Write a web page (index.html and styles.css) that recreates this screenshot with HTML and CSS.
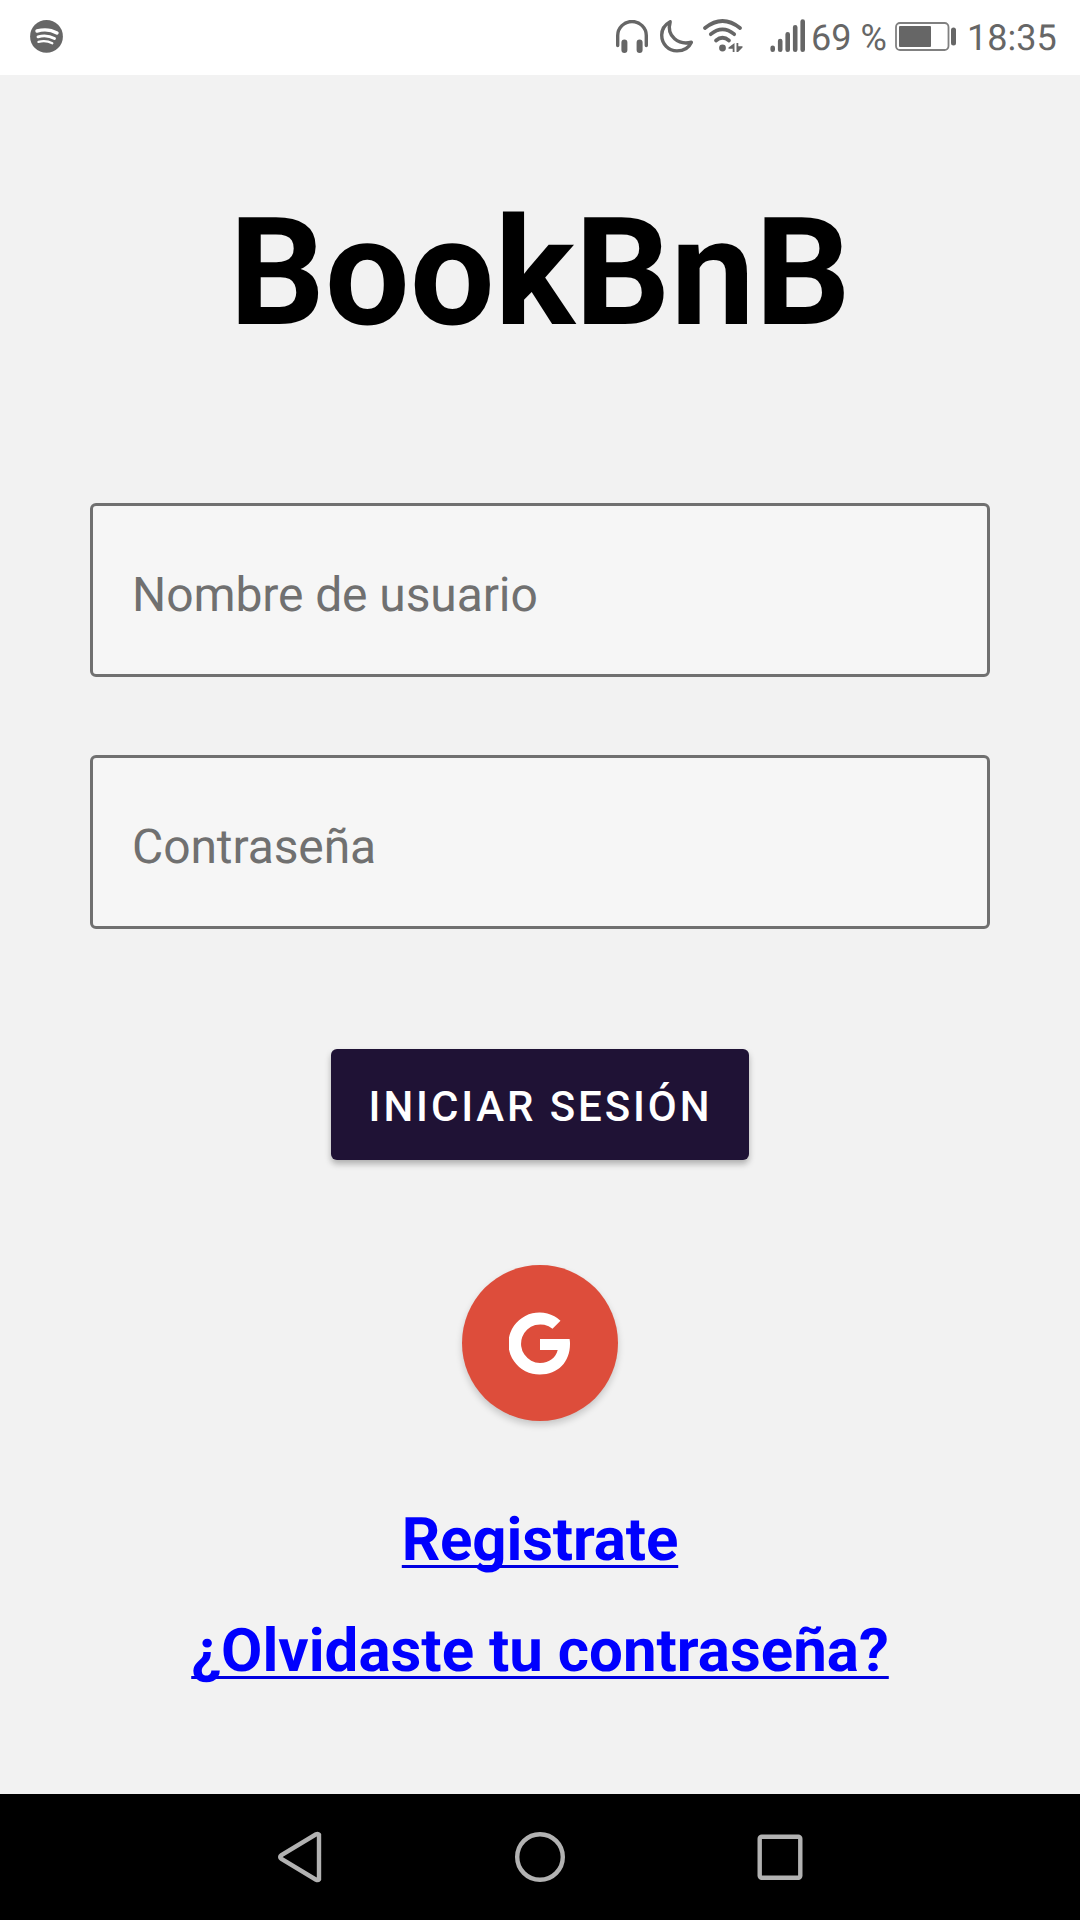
FILE: index.html
```html
<!DOCTYPE html>
<html lang="es">
<head>
<meta charset="utf-8">
<title>BookBnB</title>
<link rel="stylesheet" href="styles.css">
</head>
<body>
<div class="screen">
  <header class="status-bar">
    <svg class="spotify" width="34" height="34" viewBox="0 0 34 34">
      <circle cx="16.500" cy="17.400" r="16.400" fill="#666"/>
      <g fill="none" stroke="#fff" stroke-linecap="round">
        <path d="M7 12Q18 9 27 14" stroke-width="3.400"/>
        <path d="M8 17.800Q17 15.300 24.500 19.600" stroke-width="2.900"/>
        <path d="M8.500 22.900Q16 21 22.300 24.300" stroke-width="2.300"/>
      </g>
    </svg>
    <div class="status-icons">
      <svg class="headphones" width="32" height="34" viewBox="0 0 32 34" fill="none" stroke="#666">
        <path d="M1.700 25.500V15.500a14.300 14 0 0 1 28.600 0V25.500" stroke-width="3.400" stroke-linecap="round"/>
        <path d="M8.400 22.500v7.500M23.600 22.500v7.500" stroke-width="6" stroke-linecap="round"/>
      </svg>
      <svg class="moon" width="34" height="34" viewBox="0 0 34 34">
        <path d="M10.200 2.700C4.800 5.700 1.700 10.700 1.700 16C1.700 25 8.500 31.900 17 31.900C23.500 31.900 29 28.500 31.400 23.200C19 26.500 6 17.500 10.200 2.700Z" fill="none" stroke="#666" stroke-width="3.400" stroke-linejoin="round"/>
      </svg>
      <svg class="wifi" width="40" height="34" viewBox="0 0 40 34">
        <g fill="none" stroke="#666" stroke-width="3.700" stroke-linecap="round">
          <path d="M2 9Q19.500-5 37 9"/>
          <path d="M7.800 15.200Q19.500 5.500 31.200 15.200"/>
          <path d="M13 21.500Q19.500 16 26 21.500"/>
        </g>
        <circle cx="19.500" cy="29" r="3.400" fill="#666"/>
        <path d="M31.500 24v9h-1.800v-3.300h-4.200v-1.200zM33.500 24h1.800v3.300h4.200v1.200l-4.500 4.500h-1.500z" fill="#666"/>
      </svg>
      <svg class="signal" width="36" height="34" viewBox="0 0 36 34" fill="none" stroke="#666" stroke-width="4.600" stroke-linecap="round">
        <path d="M2.700 28.700v2M10.200 22v8.700M17.700 15.200v15.500M25.200 8.200v22.500M32.700 2.500v28.200"/>
      </svg>
      <span class="percent">69 %</span>
      <svg class="battery" width="62" height="30" viewBox="0 0 62 30">
        <rect x="1" y="1" width="52.500" height="27" rx="4" fill="none" stroke="#808080" stroke-width="1.800"/>
        <rect x="4" y="4" width="32" height="21" rx="1" fill="#666"/>
        <rect x="56" y="5.500" width="5" height="18" rx="2.500" fill="#666"/>
      </svg>
      <span class="clock">18:35</span>
    </div>
  </header>

  <main class="login">
    <h1 class="title">BookBnB</h1>
    <div class="fields">
      <div class="field"><span>Nombre de usuario</span></div>
      <div class="field"><span>Contraseña</span></div>
    </div>
    <button class="submit">INICIAR SESIÓN</button>
    <button class="google" aria-label="Google">
      <svg width="62" height="64" viewBox="0 0 62 64">
        <path d="M31 27H60.600Q61 29.500 61 32C61 50 49 62.500 31 62.500A31 31 0 1 1 51.500 8.800L43.500 16.700A19.300 19.300 0 1 0 31 51C40.500 51 46.800 45.500 48.700 38H31Z" fill="#fff"/>
      </svg>
    </button>
    <nav class="links">
      <a class="register" href="#">Registrate</a>
      <a href="#">¿Olvidaste tu contraseña?</a>
    </nav>
  </main>

  <footer class="nav-bar">
    <svg width="50" height="54" viewBox="0 0 50 54"><path d="M44 4.700V49.300Q43 50.500 41 49.700L6.500 29Q3.800 27 6.500 25L41 4.300Q43 3.500 44 4.700Z"/></svg>
    <svg width="54" height="54" viewBox="0 0 54 54"><circle cx="27" cy="27" r="22.800"/></svg>
    <svg width="50" height="54" viewBox="0 0 50 54"><rect x="4.700" y="6.700" width="40.600" height="41" rx="2"/></svg>
  </footer>
</div>
</body>
</html>
```
FILE: styles.css
```css
* {
  box-sizing: border-box;
}

body {
  margin: 0;
  font-family: Roboto, sans-serif;
  text-rendering: geometricPrecision;
}

svg {
  display: block;
  flex: none;
}

.screen {
  display: flex;
  flex-direction: column;
  width: 1080px;
  height: 1920px;
  background: #f2f2f2;
}

.status-bar {
  display: flex;
  justify-content: space-between;
  height: 75px;
  padding: 19px 23px 0 30px;
  background: #fff;
  color: #666;
  font-size: 36px;
  line-height: 36px;
}

.status-icons {
  display: flex;
  align-items: flex-start;
}

.headphones {
  margin-top: 1px;
}

.moon {
  margin-left: 12px;
}

.wifi {
  margin-left: 9px;
}

.signal {
  margin-left: 27px;
}

.percent {
  width: 75px;
  margin-left: 5px;
}

.battery {
  margin: 3px 0 0 9px;
}

.clock {
  width: 90px;
  margin-left: 10px;
}

.percent,
.clock {
  margin-top: 1px;
  white-space: nowrap;
}

.login {
  display: flex;
  flex: 1;
  flex-direction: column;
  align-items: center;
  padding-top: 110px;
}

.title {
  margin: 0;
  font-size: 150px;
  font-weight: 700;
  line-height: 176px;
  letter-spacing: 0.1px;
}

.fields {
  display: flex;
  flex-direction: column;
  gap: 78px;
  width: 900px;
  margin-top: 142px;
}

.field {
  display: flex;
  align-items: center;
  height: 174px;
  padding: 8px 39px 0;
  border: 3px solid #707070;
  border-radius: 6px;
  background: #f6f6f6;
  color: #707070;
  font-size: 48px;
  letter-spacing: -0.1px;
}

.submit {
  width: 418px;
  height: 111px;
  margin-top: 120px;
  padding: 4px 0 0 1px;
  border: 0;
  border-radius: 6px;
  background: #1f1235;
  box-shadow: 0 4px 6px rgba(0, 0, 0, 0.28);
  color: #fff;
  font: 500 42px Roboto, sans-serif;
  letter-spacing: 2.9px;
  white-space: nowrap;
}

.google {
  display: grid;
  place-items: center;
  width: 156px;
  height: 156px;
  margin-top: 105px;
  padding: 2px 0 0;
  border: 0;
  border-radius: 50%;
  background: #dd4d3b;
  box-shadow: 0 4px 7px rgba(0, 0, 0, 0.18);
}

.links {
  display: flex;
  flex-direction: column;
  align-items: center;
  gap: 41px;
  margin-top: 84px;
}

.links a {
  color: #0000fe;
  font-size: 60px;
  font-weight: 700;
  line-height: 70px;
  text-decoration: underline;
  text-decoration-color: #0000e0;
  text-decoration-skip-ink: none;
  text-decoration-thickness: 3px;
  text-underline-offset: 5px;
}

.links .register {
  letter-spacing: -0.15px;
}

.nav-bar {
  display: flex;
  align-items: center;
  justify-content: space-between;
  height: 126px;
  padding: 0 275px;
  background: #000;
}

.nav-bar svg {
  fill: none;
  stroke: #b2b2b2;
  stroke-width: 4.4;
}
```
